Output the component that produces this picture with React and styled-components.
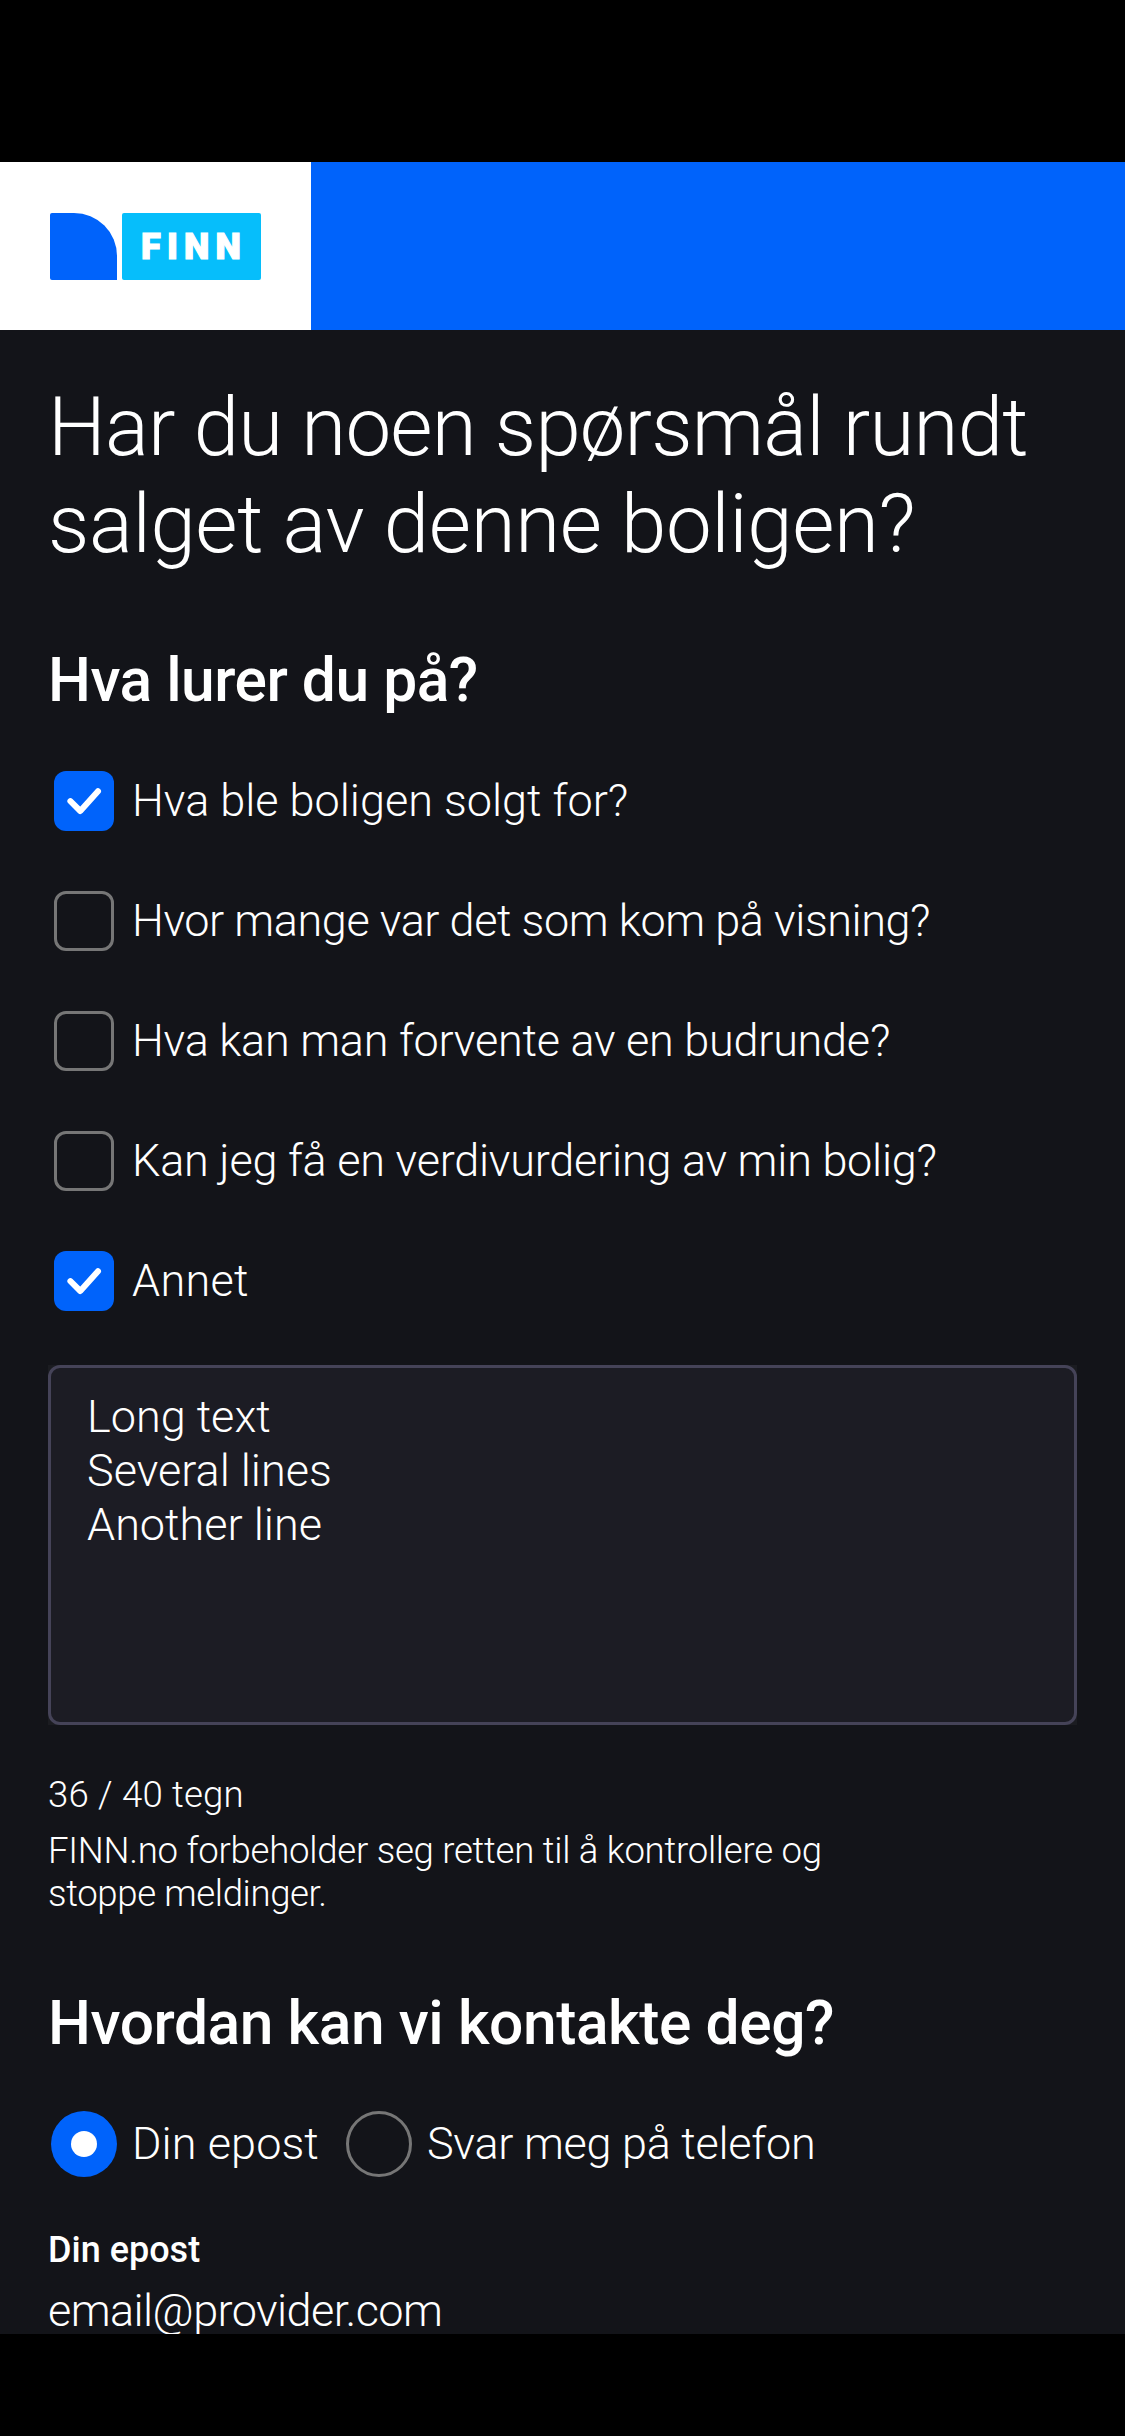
import React, { useState } from "react";
import styled, { createGlobalStyle } from "styled-components";

const GlobalStyle = createGlobalStyle`
  *, *::before, *::after { box-sizing: border-box; }
  body {
    margin: 0;
    background: #000;
    color: #fff;
    font-family: Roboto, "Liberation Sans", sans-serif;
    font-weight: 300;
    font-kerning: normal;
  }
`;

const Screen = styled.div`
  width: 1125px;
  height: 2436px;
  padding: 162px 0 102px;
  background: #000;
  overflow: hidden;
`;

const Viewport = styled.div`
  height: 2172px;
  background: #131419;
  overflow: hidden;
`;

const Header = styled.header`
  display: flex;
  height: 168px;
  background: #0063fb;
`;

const LogoPanel = styled.div`
  display: flex;
  align-items: flex-start;
  gap: 5px;
  width: 311px;
  padding: 51px 0 0 49.5px;
  background: #fff;
`;

const LogoMark = styled.div`
  width: 67px;
  height: 67px;
  background: #0063fb;
  border-radius: 2px 43px 0 2px;
`;

const LogoName = styled.div`
  width: 139px;
  height: 67px;
  padding-left: 19.5px;
  background: #06befb;
  border-radius: 2px;
  color: #fff;
  font-size: 36px;
  font-weight: 900;
  line-height: 68px;
  letter-spacing: 6.2px;
  -webkit-text-stroke: 1.2px #fff;
`;

const Form = styled.main`
  display: flex;
  flex-direction: column;
  padding: 49px 48px 0;
`;

const Line = styled.span`
  display: ${(p) => (p.$block ? "block" : "inline")};
  letter-spacing: ${(p) => p.$track || 0}px;
  white-space: nowrap;
`;

const Title = styled.h1`
  margin: 0;
  font-size: 81.6px;
  font-weight: 300;
  line-height: 97px;
`;

const SectionTitle = styled.h2`
  margin: 70px 0 0;
  font-size: 60.5px;
  font-weight: 500;
  line-height: 76px;
`;

const CheckList = styled.div`
  display: flex;
  flex-direction: column;
  gap: 60px;
  margin-top: 52px;
`;

const CheckRow = styled.label`
  display: flex;
  align-items: center;
  gap: 18px;
  height: 60px;
  padding-left: 6px;
  font-size: 45px;
  line-height: 60px;
`;

const CheckBox = styled.span`
  display: block;
  width: 60px;
  height: 60px;
  border: ${(p) => (p.$checked ? "0" : "3px solid #767676")};
  border-radius: 12px;
  background: ${(p) => (p.$checked ? "#0063fb" : "transparent")};
`;

const HiddenInput = styled.input`
  display: none;
`;

const MessageFrame = styled.div`
  margin-top: 54px;
  height: 360px;
  background: #1b1c21;
`;

const Message = styled.textarea`
  display: block;
  width: 100%;
  height: 100%;
  margin: 0;
  padding: 22px 36px;
  border: 3px solid #454358;
  border-radius: 12px;
  outline: none;
  resize: none;
  overflow: hidden;
  background: #1c1c24;
  color: #fff;
  font-family: inherit;
  font-size: 45px;
  font-weight: 300;
  line-height: 54px;
`;

const Counter = styled.div`
  margin-top: 48px;
  font-size: 36.6px;
  line-height: 44px;
`;

const Notice = styled.p`
  margin: 12px 0 1px;
  font-size: 36.6px;
  line-height: 43px;
`;

const RadioGroup = styled.div`
  display: flex;
  gap: 27px;
  margin-top: 49px;
  padding-left: 3px;
`;

const RadioOption = styled.label`
  display: flex;
  align-items: center;
  gap: 15px;
  height: 66px;
  font-size: 45px;
  line-height: 66px;
`;

const RadioDot = styled.span`
  display: flex;
  align-items: center;
  justify-content: center;
  width: 66px;
  height: 66px;
  border: ${(p) => (p.$checked ? "0" : "3px solid #767676")};
  border-radius: 50%;
  background: ${(p) => (p.$checked ? "#0063fb" : "transparent")};

  &::after {
    content: "";
    width: 26px;
    height: 26px;
    border-radius: 50%;
    background: ${(p) => (p.$checked ? "#fff" : "transparent")};
  }
`;

const FieldLabel = styled.label`
  margin-top: 51px;
  font-size: 36px;
  font-weight: 500;
  line-height: 44px;
`;

const EmailInput = styled.input`
  height: 60px;
  margin: 9px 0 0;
  padding: 0;
  border: 0;
  outline: none;
  background: transparent;
  color: #fff;
  font-family: inherit;
  font-size: 45px;
  font-weight: 300;
  line-height: 60px;
  letter-spacing: -0.58px;
`;

const questions = [
  { text: "Hva ble boligen solgt for?", track: 0 },
  { text: "Hvor mange var det som kom på visning?", track: -0.43 },
  { text: "Hva kan man forvente av en budrunde?", track: -0.25 },
  { text: "Kan jeg få en verdivurdering av min bolig?", track: -0.23 },
  { text: "Annet", track: 0.3 },
];

const channels = [
  { text: "Din epost", track: 0.1 },
  { text: "Svar meg på telefon", track: -0.26 },
];

function CheckMark() {
  return (
    <svg width="60" height="60" viewBox="0 0 60 60" fill="none">
      <path
        d="M16.4 30.2 L26.3 40 L44 20.2"
        stroke="#fff"
        strokeWidth="6"
        strokeLinecap="round"
        strokeLinejoin="round"
      />
    </svg>
  );
}

export default function App() {
  const [checked, setChecked] = useState([true, false, false, false, true]);
  const [channel, setChannel] = useState(0);
  const [message, setMessage] = useState("Long text\nSeveral lines\nAnother line");
  const [email, setEmail] = useState("email@provider.com");

  const toggle = (index) =>
    setChecked(checked.map((value, i) => (i === index ? !value : value)));

  return (
    <>
      <GlobalStyle />
      <Screen>
        <Viewport>
          <Header>
            <LogoPanel>
              <LogoMark />
              <LogoName>FINN</LogoName>
            </LogoPanel>
          </Header>
          <Form>
            <Title>
              <Line $block $track={-0.8}>Har du noen spørsmål rundt</Line>
              <Line $block $track={-0.35}>salget av denne boligen?</Line>
            </Title>

            <SectionTitle>
              <Line $track={-0.5}>Hva lurer du på?</Line>
            </SectionTitle>
            <CheckList>
              {questions.map((q, i) => (
                <CheckRow key={q.text}>
                  <HiddenInput type="checkbox" checked={checked[i]} onChange={() => toggle(i)} />
                  <CheckBox $checked={checked[i]}>{checked[i] && <CheckMark />}</CheckBox>
                  <Line $track={q.track}>{q.text}</Line>
                </CheckRow>
              ))}
            </CheckList>
            <MessageFrame>
              <Message
                value={message}
                spellCheck={false}
                onChange={(e) => setMessage(e.target.value)}
              />
            </MessageFrame>
            <Counter>
              <Line $track={0.2}>{`${message.length} / 40 tegn`}</Line>
            </Counter>
            <Notice>
              <Line $block $track={-0.27}>FINN.no forbeholder seg retten til å kontrollere og</Line>
              <Line $block $track={-0.38}>stoppe meldinger.</Line>
            </Notice>

            <SectionTitle>
              <Line $track={-0.43}>Hvordan kan vi kontakte deg?</Line>
            </SectionTitle>
            <RadioGroup>
              {channels.map((c, i) => (
                <RadioOption key={c.text}>
                  <HiddenInput
                    type="radio"
                    name="channel"
                    checked={channel === i}
                    onChange={() => setChannel(i)}
                  />
                  <RadioDot $checked={channel === i} />
                  <Line $track={c.track}>{c.text}</Line>
                </RadioOption>
              ))}
            </RadioGroup>
            <FieldLabel htmlFor="email">Din epost</FieldLabel>
            <EmailInput
              id="email"
              value={email}
              spellCheck={false}
              onChange={(e) => setEmail(e.target.value)}
            />
          </Form>
        </Viewport>
      </Screen>
    </>
  );
}
